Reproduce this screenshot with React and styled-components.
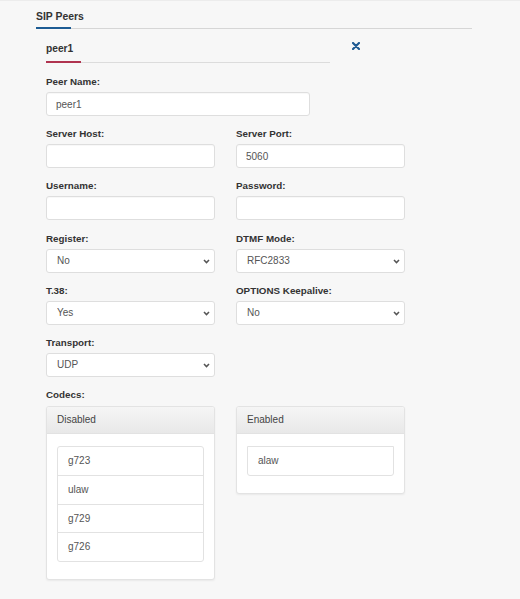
import React from 'react';
import styled, { createGlobalStyle } from 'styled-components';

const GlobalStyle = createGlobalStyle`
  html, body {
    margin: 0;
    padding: 0;
    background: #f7f7f7;
    font-family: "Liberation Sans", Arial, sans-serif;
  }
  body {
    border-top: 1px solid #ececec;
  }
`;

const Page = styled.div`
  padding: 0 48px 30px 36px;
  min-height: 598px;
  box-sizing: border-box;
`;

const TabBar = styled.div`
  display: flex;
  border-bottom: 1px solid ${(p) => (p.$sub ? '#dcdcdc' : '#d6d6d6')};
  width: ${(p) => (p.$sub ? '284px' : 'auto')};
`;

const Tab = styled.div`
  position: relative;
  padding: ${(p) => (p.$sub ? '0 0 6px' : '9px 0 4px')};
  font-size: ${(p) => (p.$sub ? '10.2px' : '10.4px')};
  line-height: 14px;
  font-weight: bold;
  color: #333;

  &::after {
    content: '';
    position: absolute;
    left: 0;
    bottom: -1px;
    width: 35px;
    height: 2px;
    background: ${(p) => p.$accent};
  }
`;

const Section = styled.div`
  padding: 13px 0 0 10px;
`;

const HeadRow = styled.div`
  display: flex;
  align-items: flex-start;
  gap: 22px;
`;

const CloseButton = styled.button`
  border: 0;
  background: none;
  padding: 0;
  margin: 0;
  width: 8px;
  height: 8px;
  display: block;
  cursor: pointer;
  svg { display: block; }
`;

const Form = styled.div`
  display: grid;
  grid-template-columns: 169px 169px;
  column-gap: 21px;
  row-gap: 11.2px;
  margin-top: ${(p) => (p.$flush ? '0' : '12px')};
`;

const Field = styled.div`
  grid-column: ${(p) => (p.$wide ? '1 / span 2' : 'auto')};
  display: flex;
  flex-direction: column;
`;

const Label = styled.label`
  font-size: 9.8px;
  line-height: 14px;
  font-weight: bold;
  color: #333;
  margin-bottom: 3px;
`;

const TextInput = styled.input`
  box-sizing: border-box;
  width: ${(p) => (p.$wide ? '264px' : '100%')};
  height: 24px;
  padding: 0 9px;
  border: 1px solid #dedede;
  border-radius: 3px;
  background: #fff;
  box-shadow: inset 0 1px 1px rgba(0, 0, 0, 0.03);
  font-family: inherit;
  font-size: 10px;
  color: #555;
  outline: none;
`;

const SelectWrap = styled.div`
  position: relative;
  width: 100%;
`;

const Select = styled.select`
  appearance: none;
  box-sizing: border-box;
  width: 100%;
  height: 24px;
  padding: 0 20px 0 10px;
  border: 1px solid #dedede;
  border-radius: 3px;
  background: #fff;
  font-family: inherit;
  font-size: 10px;
  color: #555;
  outline: none;
`;

const Chevron = styled.svg`
  position: absolute;
  right: 5px;
  top: 10px;
  pointer-events: none;
`;

const Panel = styled.div`
  align-self: start;
  margin-top: 1px;
  background: #fff;
  border: 1px solid #e3e3e3;
  border-radius: 3px;
  box-shadow: 0 1px 2px rgba(0, 0, 0, 0.06);
  overflow: hidden;
`;

const PanelHead = styled.div`
  padding: 6px 10px;
  line-height: 14px;
  font-size: 10px;
  color: #444;
  background: linear-gradient(#f5f5f5, #e8e8e8);
  border-bottom: 1px solid #e2e2e2;
`;

const PanelBody = styled.div`
  padding: 12px 10px 17px;
`;

const List = styled.ul`
  list-style: none;
  margin: 0;
  padding: 0;
`;

const Item = styled.li`
  padding: 7px 10px;
  line-height: 13.75px;
  font-size: 10px;
  color: #555;
  background: #fff;
  border: 1px solid #e2e2e2;
  margin-bottom: -1px;

  &:first-child { border-radius: 3px 3px 0 0; }
  &:last-child { border-radius: 0 0 3px 3px; margin-bottom: 0; }
`;

function Dropdown({ value, options }) {
  return (
    <SelectWrap>
      <Select defaultValue={value}>
        {options.map((o) => (
          <option key={o}>{o}</option>
        ))}
      </Select>
      <Chevron width="7" height="5" viewBox="0 0 7 5">
        <polyline points="1,1 3.5,3.6 6,1" fill="none" stroke="#555" strokeWidth="1.5" />
      </Chevron>
    </SelectWrap>
  );
}

function CodecPanel({ title, codecs }) {
  return (
    <Panel>
      <PanelHead>{title}</PanelHead>
      <PanelBody>
        <List>
          {codecs.map((c) => (
            <Item key={c}>{c}</Item>
          ))}
        </List>
      </PanelBody>
    </Panel>
  );
}

export default function App() {
  return (
    <Page>
      <GlobalStyle />
      <TabBar>
        <Tab $accent="#1c5b93">SIP Peers</Tab>
      </TabBar>
      <Section>
        <HeadRow>
          <TabBar $sub>
            <Tab $sub $accent="#b03450">peer1</Tab>
          </TabBar>
          <CloseButton aria-label="Remove peer">
            <svg width="8" height="8" viewBox="0 0 8 8">
              <path d="M1 1 L7 7 M7 1 L1 7" stroke="#1f5a92" strokeWidth="2.2" strokeLinecap="round" />
            </svg>
          </CloseButton>
        </HeadRow>
        <Form>
          <Field $wide>
            <Label>Peer Name:</Label>
            <TextInput $wide defaultValue="peer1" />
          </Field>
          <Field>
            <Label>Server Host:</Label>
            <TextInput />
          </Field>
          <Field>
            <Label>Server Port:</Label>
            <TextInput defaultValue="5060" />
          </Field>
          <Field>
            <Label>Username:</Label>
            <TextInput />
          </Field>
          <Field>
            <Label>Password:</Label>
            <TextInput type="password" />
          </Field>
          <Field>
            <Label>Register:</Label>
            <Dropdown value="No" options={['No', 'Yes']} />
          </Field>
          <Field>
            <Label>DTMF Mode:</Label>
            <Dropdown value="RFC2833" options={['RFC2833', 'Inband', 'SIP INFO']} />
          </Field>
          <Field>
            <Label>T.38:</Label>
            <Dropdown value="Yes" options={['No', 'Yes']} />
          </Field>
          <Field>
            <Label>OPTIONS Keepalive:</Label>
            <Dropdown value="No" options={['No', 'Yes']} />
          </Field>
          <Field>
            <Label>Transport:</Label>
            <Dropdown value="UDP" options={['UDP', 'TCP', 'TLS']} />
          </Field>
          <Field />
          <Field $wide>
            <Label>Codecs:</Label>
          </Field>
        </Form>
        <Form $flush>
          <CodecPanel title="Disabled" codecs={['g723', 'ulaw', 'g729', 'g726']} />
          <CodecPanel title="Enabled" codecs={['alaw']} />
        </Form>
      </Section>
    </Page>
  );
}
